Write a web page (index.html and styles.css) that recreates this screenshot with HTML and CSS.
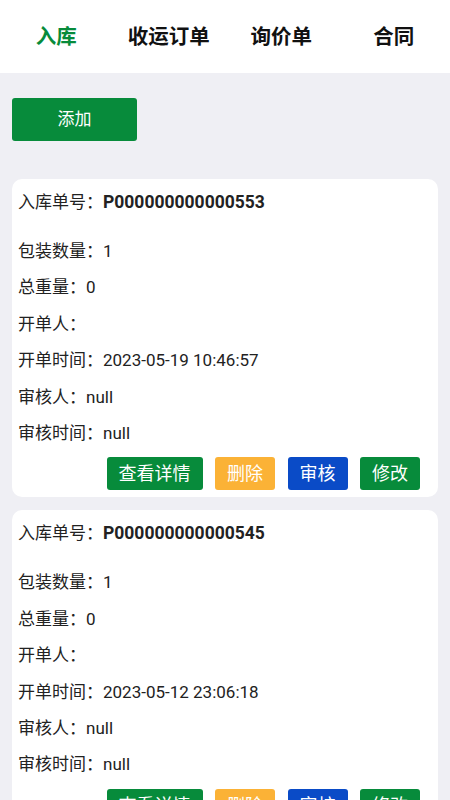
FILE: index.html
```html
<!DOCTYPE html>
<html>
<head>
    <meta charset="utf-8">
    <title>入库</title>
    <link rel="stylesheet" href="styles.css">
</head>
<body>
    <div class="tabs">
        <div class="tab active">入库</div>
        <div class="tab">收运订单</div>
        <div class="tab">询价单</div>
        <div class="tab">合同</div>
    </div>
    <div class="main">
        <div class="add-btn">添加</div>

        <div class="card">
            <div class="row first">入库单号：<b>P000000000000553</b></div>
            <div class="row">包装数量：1</div>
            <div class="row">总重量：0</div>
            <div class="row">开单人：</div>
            <div class="row">开单时间：2023-05-19 10:46:57</div>
            <div class="row">审核人：null</div>
            <div class="row">审核时间：null</div>
            <div class="actions">
                <span class="btn green">查看详情</span>
                <span class="btn orange">删除</span>
                <span class="btn blue">审核</span>
                <span class="btn green">修改</span>
            </div>
        </div>

        <div class="card">
            <div class="row first">入库单号：<b>P000000000000545</b></div>
            <div class="row">包装数量：1</div>
            <div class="row">总重量：0</div>
            <div class="row">开单人：</div>
            <div class="row">开单时间：2023-05-12 23:06:18</div>
            <div class="row">审核人：null</div>
            <div class="row">审核时间：null</div>
            <div class="actions">
                <span class="btn green">查看详情</span>
                <span class="btn orange">删除</span>
                <span class="btn blue">审核</span>
                <span class="btn green">修改</span>
            </div>
        </div>
    </div>
</body>
</html>
```

FILE: styles.css
```css
body {
    margin: 0;
    background-color: #efeff4;
    font-family: Roboto, "Noto Sans CJK SC", sans-serif;
    color: #222;
}
.tabs {
    display: flex;
    height: 73px;
    background-color: white;
    padding-bottom: 3px;
    box-sizing: border-box;
}
.tab {
    flex: 1;
    display: flex;
    align-items: center;
    justify-content: center;
    font-size: 20.5px;
    font-weight: bold;
    color: #111;
}
.tab.active {
    color: #078b3b;
}
.main {
    padding: 25px 12px 0;
}
.add-btn {
    width: 125px;
    height: 43px;
    line-height: 43px;
    text-align: center;
    background-color: #078b3b;
    color: white;
    font-size: 17px;
    border-radius: 3px;
    margin-bottom: 38px;
}
.card {
    background-color: white;
    border-radius: 10px;
    padding: 5px 18px 7px 6px;
    margin-bottom: 13px;
}
.row {
    font-size: 17px;
    line-height: 36.4px;
}
.row.first {
    margin-bottom: 12.6px;
}
.row b {
    font-size: 17.5px;
}
.actions {
    display: flex;
    justify-content: flex-end;
    gap: 12.5px;
    margin-top: 6px;
}
.btn {
    height: 33px;
    line-height: 33px;
    padding: 0 12px;
    border-radius: 3px;
    color: white;
    font-size: 18px;
}
.green {
    background-color: #078b3b;
}
.orange {
    background-color: #fbb236;
}
.blue {
    background-color: #0a4bc7;
}
```
